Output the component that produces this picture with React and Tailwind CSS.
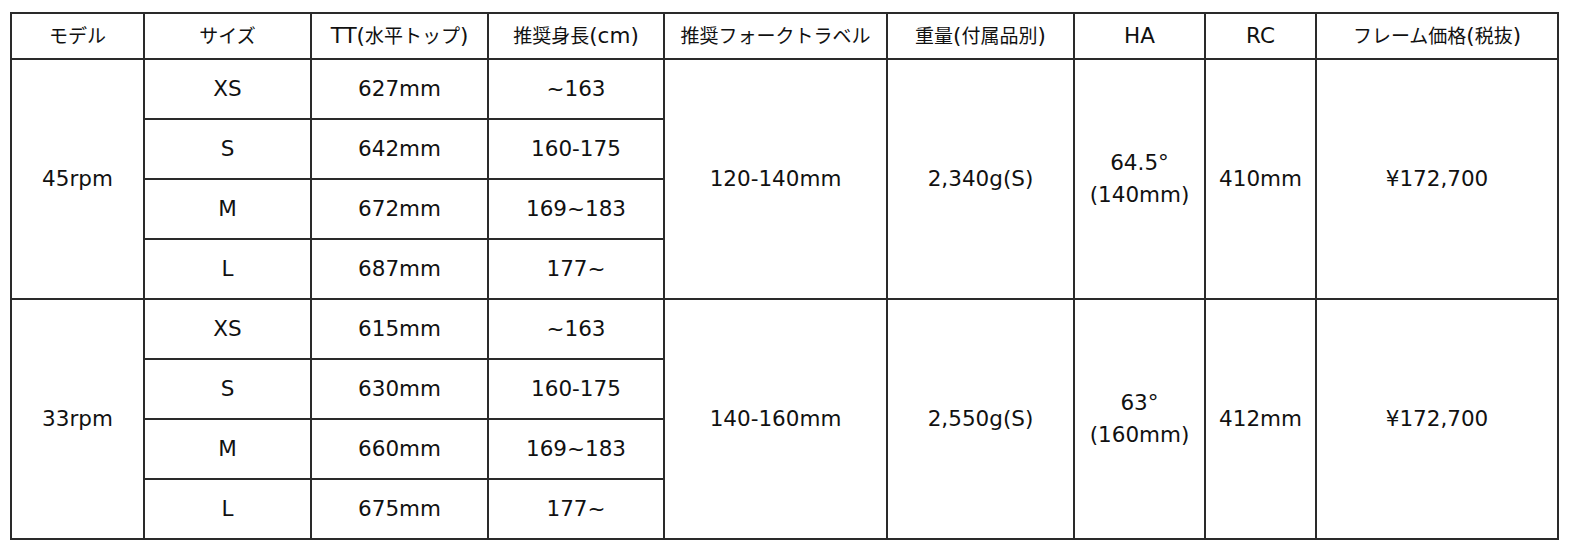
const cols = [133, 167, 177, 176, 223, 187, 131, 111, 242];

const models = [
  {
    name: "45rpm",
    rows: [
      ["XS", "627mm", "~163"],
      ["S", "642mm", "160-175"],
      ["M", "672mm", "169~183"],
      ["L", "687mm", "177~"],
    ],
    travel: "120-140mm",
    weight: "2,340g(S)",
    ha: ["64.5°", "(140mm)"],
    rc: "410mm",
    price: "¥172,700",
  },
  {
    name: "33rpm",
    rows: [
      ["XS", "615mm", "~163"],
      ["S", "630mm", "160-175"],
      ["M", "660mm", "169~183"],
      ["L", "675mm", "177~"],
    ],
    travel: "140-160mm",
    weight: "2,550g(S)",
    ha: ["63°", "(160mm)"],
    rc: "412mm",
    price: "¥172,700",
  },
];

function J({ children }) {
  return <span className="text-[19px]">{children}</span>;
}

const cell = "border-2 border-[#2a2a2a] text-center align-middle p-0";

function App() {
  return (
    <div
      className="w-[1569px] h-[550px] bg-white text-[#111] overflow-hidden"
      style={{ fontFamily: '"DejaVu Sans", "Noto Sans CJK JP", sans-serif' }}
    >
      <table className="ml-[10px] mt-[12px] border-collapse table-fixed text-[21.5px] leading-[32px]">
        <colgroup>
          {cols.map((w, i) => (
            <col key={i} style={{ width: w }} />
          ))}
        </colgroup>
        <thead>
          <tr className="h-[46px]">
            <th className={cell + " font-normal"}><J>モデル</J></th>
            <th className={cell + " font-normal"}><J>サイズ</J></th>
            <th className={cell + " font-normal"}>TT(<J>水平トップ</J>)</th>
            <th className={cell + " font-normal"}><J>推奨身長</J>(cm)</th>
            <th className={cell + " font-normal"}><J>推奨フォークトラベル</J></th>
            <th className={cell + " font-normal"}><J>重量</J>(<J>付属品別</J>)</th>
            <th className={cell + " font-normal"}>HA</th>
            <th className={cell + " font-normal"}>RC</th>
            <th className={cell + " font-normal"}><J>フレーム価格</J>(<J>税抜</J>)</th>
          </tr>
        </thead>
        <tbody>
          {models.map((m) =>
            m.rows.map((r, i) => (
              <tr key={m.name + r[0]} className="h-[60px]">
                {i === 0 && (
                  <td rowSpan={4} className={cell}>{m.name}</td>
                )}
                <td className={cell}>{r[0]}</td>
                <td className={cell}>{r[1]}</td>
                <td className={cell}>{r[2]}</td>
                {i === 0 && (
                  <>
                    <td rowSpan={4} className={cell}>{m.travel}</td>
                    <td rowSpan={4} className={cell}>{m.weight}</td>
                    <td rowSpan={4} className={cell}>
                      {m.ha[0]}
                      <br />
                      {m.ha[1]}
                    </td>
                    <td rowSpan={4} className={cell}>{m.rc}</td>
                    <td rowSpan={4} className={cell}>{m.price}</td>
                  </>
                )}
              </tr>
            ))
          )}
        </tbody>
      </table>
    </div>
  );
}

export default App;
